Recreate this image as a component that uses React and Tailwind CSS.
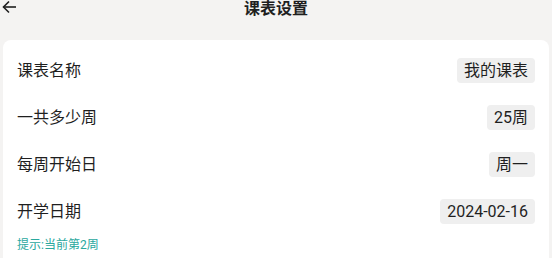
export default function App() {
  const rows = [
    { label: "课表名称", value: "我的课表" },
    { label: "一共多少周", value: "25周" },
    { label: "每周开始日", value: "周一" },
    { label: "开学日期", value: "2024-02-16" },
  ];

  return (
    <div
      className="h-[258px] w-[552px] overflow-hidden bg-[#f4f3f2] text-[#1f1f1f]"
      style={{ fontFamily: "Roboto, 'Noto Sans CJK SC', sans-serif" }}
    >
      {/* header */}
      <div className="grid h-[40px] grid-cols-[1fr_auto_1fr] items-start">
        <div className="pl-[2px] pt-0">
          <svg width="15" height="14" viewBox="0 0 15 14" fill="none" stroke="#1f1f1f" strokeWidth="1.6">
            <path d="M14 7H1.5" />
            <path d="M7 1.5L1.5 7L7 12.5" />
          </svg>
        </div>
        <div className="pt-[1px] text-[16px] font-bold leading-[16px]">课表设置</div>
        <div />
      </div>

      {/* card */}
      <div className="mx-[3px] h-[240px] rounded-[8px] bg-white px-[14px] pt-[7px]">
        {rows.map((row) => (
          <div key={row.label} className="flex h-[47px] items-center justify-between">
            <span className="text-[16px]">{row.label}</span>
            <span className="flex h-[25px] items-center rounded-[4px] bg-[#efefef] px-[7px] text-[16px]">
              {row.value}
            </span>
          </div>
        ))}
        <div className="mt-[2px] text-[12px] leading-[16px] text-[#2aa89e]">提示:当前第2周</div>
      </div>
    </div>
  );
}
